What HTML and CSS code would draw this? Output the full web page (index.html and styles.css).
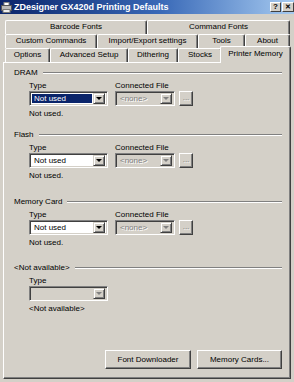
FILE: index.html
```html
<!DOCTYPE html>
<html>
<head>
<meta charset="utf-8">
<link rel="stylesheet" href="styles.css">
</head>
<body>
<div class="window">
  <div class="titlebar">
    <svg class="appicon" width="11" height="11" viewBox="0 0 11 11">
      <rect x="3" y="0.5" width="5" height="3" fill="#fff" stroke="#888" stroke-width="1"/>
      <rect x="0.5" y="3.5" width="10" height="5" fill="#b8b8b8" stroke="#555" stroke-width="1"/>
      <rect x="2" y="7.5" width="7" height="3" fill="#eee" stroke="#777" stroke-width="1"/>
    </svg>
    <span class="title">ZDesigner GX420d Printing Defaults</span>
    <span class="tbtn help">?</span>
    <span class="tbtn close">✕</span>
  </div>

  <div class="tabs">
    <div class="tabrow">
      <div class="tab w142">Barcode Fonts</div>
      <div class="tab w143">Command Fonts</div>
    </div>
    <div class="tabrow">
      <div class="tab w92">Custom Commands</div>
      <div class="tab w101">Import/Export settings</div>
      <div class="tab w47">Tools</div>
      <div class="tab w45">About</div>
    </div>
    <div class="tabrow">
      <div class="tab w45">Options</div>
      <div class="tab w78">Advanced Setup</div>
      <div class="tab w50">Dithering</div>
      <div class="tab w44">Stocks</div>
      <div class="tab w68 active">Printer Memory</div>
    </div>
  </div>

  <div class="panel">
    <div class="group g-dram">
      <div class="legend"><span>DRAM</span><i class="rule"></i></div>
      <div class="fields">
        <div class="field typecol">
          <div class="lbl">Type</div>
          <div class="combo wide"><span class="val selected">Not used</span><span class="arrow"><i></i></span></div>
        </div>
        <div class="field">
          <div class="lbl">Connected File</div>
          <div class="filerow">
            <div class="combo narrow disabled"><span class="val">&lt;none&gt;</span><span class="arrow"><i></i></span></div>
            <div class="dots">...</div>
          </div>
        </div>
      </div>
      <div class="status">Not used.</div>
    </div>

    <div class="group g-flash">
      <div class="legend"><span>Flash</span><i class="rule"></i></div>
      <div class="fields">
        <div class="field typecol">
          <div class="lbl">Type</div>
          <div class="combo wide"><span class="val">Not used</span><span class="arrow"><i></i></span></div>
        </div>
        <div class="field">
          <div class="lbl">Connected File</div>
          <div class="filerow">
            <div class="combo narrow disabled"><span class="val">&lt;none&gt;</span><span class="arrow"><i></i></span></div>
            <div class="dots">...</div>
          </div>
        </div>
      </div>
      <div class="status">Not used.</div>
    </div>

    <div class="group g-card">
      <div class="legend"><span>Memory Card</span><i class="rule"></i></div>
      <div class="fields">
        <div class="field typecol">
          <div class="lbl">Type</div>
          <div class="combo wide"><span class="val">Not used</span><span class="arrow"><i></i></span></div>
        </div>
        <div class="field">
          <div class="lbl">Connected File</div>
          <div class="filerow">
            <div class="combo narrow disabled"><span class="val">&lt;none&gt;</span><span class="arrow"><i></i></span></div>
            <div class="dots">...</div>
          </div>
        </div>
      </div>
      <div class="status">Not used.</div>
    </div>

    <div class="group g-na">
      <div class="legend"><span>&lt;Not available&gt;</span><i class="rule"></i></div>
      <div class="fields">
        <div class="field typecol">
          <div class="lbl">Type</div>
          <div class="combo wide disabled"><span class="val"></span><span class="arrow"><i></i></span></div>
        </div>
      </div>
      <div class="status">&lt;Not available&gt;</div>
    </div>

    <div class="buttons">
      <div class="btn fd">Font Downloader</div>
      <div class="btn mc">Memory Cards...</div>
    </div>
  </div>
</div>
</body>
</html>
```

FILE: styles.css
```css
* { box-sizing: border-box; }
html, body {
  margin: 0;
  padding: 0;
  background: #d4d0c8;
  width: 294px;
  height: 382px;
  overflow: hidden;
  font-family: "Liberation Sans", Arial, sans-serif;
  font-size: 8px;
  color: #000;
}
.window { width: 294px; height: 382px; display: flex; flex-direction: column; }

.titlebar {
  height: 14px;
  background: linear-gradient(to right, #0a246a 0%, #3a6ab8 55%, #a6caf0 100%);
  display: flex;
  align-items: center;
  padding-left: 1px;
}
.appicon { flex: none; margin-right: 2px; }
.title {
  color: #fff;
  font-weight: bold;
  font-size: 9px;
  flex: 1;
  white-space: nowrap;
}
.tbtn {
  flex: none;
  width: 11px;
  height: 10px;
  background: #d4d0c8;
  border-top: 1px solid #fff;
  border-left: 1px solid #fff;
  border-right: 1px solid #404040;
  border-bottom: 1px solid #404040;
  font-size: 8px;
  font-weight: bold;
  line-height: 8px;
  text-align: center;
  color: #000;
}
.help { margin-right: 1px; }
.close { font-size: 7px; width: 12px; }

.tabs { margin-top: 6px; margin-left: 5px; width: 285px; }
.tabrow { display: flex; height: 14px; }
.tab {
  flex: none;
  height: 14px;
  border-top: 1px solid #fff;
  border-left: 1px solid #fff;
  border-right: 1px solid #404040;
  box-shadow: inset -1px 0 #808080;
  border-radius: 2px 2px 0 0;
  text-align: center;
  line-height: 12px;
  white-space: nowrap;
  background: #d4d0c8;
}
.w142 { width: 142px; }
.w143 { width: 143px; }
.w92 { width: 92px; }
.w101 { width: 101px; }
.w47 { width: 47px; }
.w45 { width: 45px; }
.w78 { width: 78px; }
.w50 { width: 50px; }
.w44 { width: 44px; }
.w68 { width: 68px; }
.tab.active {
  width: 71px;
  height: 17px;
  margin-top: -2px;
  margin-left: -2px;
  margin-right: -1px;
  position: relative;
  z-index: 1;
  line-height: 14px;
}

.panel {
  margin-left: 3px;
  width: 288px;
  height: 317px;
  border-top: 1px solid #fff;
  border-left: 1px solid #fff;
  border-right: 1px solid #404040;
  border-bottom: 1px solid #404040;
  box-shadow: inset -1px -1px #808080;
  padding: 5px 8px 9px 10px;
  display: flex;
  flex-direction: column;
}

.g-dram { margin-bottom: 11px; }
.g-flash { margin-bottom: 16px; }
.g-card { margin-bottom: 15px; }
.legend { display: flex; align-items: center; height: 10px; line-height: 10px; }
.legend span { flex: none; margin-right: 5px; }
.rule {
  flex: 1;
  height: 2px;
  border-top: 1px solid #808080;
  border-bottom: 1px solid #fff;
}
.fields { display: flex; margin-left: 15px; margin-top: 3px; }
.typecol { width: 86px; }
.lbl { height: 10px; line-height: 10px; }
.filerow { display: flex; gap: 4px; }

.combo {
  height: 15px;
  display: flex;
  border-top: 1px solid #808080;
  border-left: 1px solid #808080;
  border-right: 1px solid #fff;
  border-bottom: 1px solid #fff;
  box-shadow: inset 1px 1px #404040, inset -1px -1px #d4d0c8;
  background: #fff;
  padding: 2px;
}
.combo.wide { width: 79px; }
.combo.narrow { width: 60px; }
.combo.disabled { background: #d4d0c8; }
.val {
  flex: 1;
  line-height: 9px;
  padding-left: 2px;
  margin-right: 1px;
  white-space: nowrap;
  overflow: hidden;
}
.val.selected { background: #0a246a; color: #fff; }
.disabled .val { color: #808080; text-shadow: 1px 1px #fff; }
.arrow {
  flex: none;
  width: 12px;
  height: 11px;
  margin-top: -1px;
  background: #d4d0c8;
  border-top: 1px solid #d4d0c8;
  border-left: 1px solid #d4d0c8;
  border-right: 1px solid #404040;
  border-bottom: 1px solid #404040;
  box-shadow: inset 1px 1px #fff, inset -1px -1px #808080;
  display: flex;
  align-items: center;
  justify-content: center;
}
.arrow i {
  width: 0; height: 0;
  border-left: 3px solid transparent;
  border-right: 3px solid transparent;
  border-top: 3px solid #000;
}
.disabled .arrow i { border-top-color: #808080; }

.dots {
  width: 14px;
  height: 15px;
  border-top: 1px solid #fff;
  border-left: 1px solid #fff;
  border-right: 1px solid #404040;
  border-bottom: 1px solid #404040;
  box-shadow: inset -1px -1px #808080;
  text-align: center;
  line-height: 12px;
  color: #808080;
  text-shadow: 1px 1px #fff;
}

.status { margin-left: 15px; margin-top: 3px; height: 10px; line-height: 10px; }

.buttons {
  margin-top: auto;
  display: flex;
  justify-content: flex-end;
  gap: 6px;
}
.btn {
  height: 19px;
  border-top: 1px solid #fff;
  border-left: 1px solid #fff;
  border-right: 1px solid #404040;
  border-bottom: 1px solid #404040;
  box-shadow: inset -1px -1px #808080;
  text-align: center;
  line-height: 17px;
  white-space: nowrap;
}
.fd { width: 86px; }
.mc { width: 85px; }
```
